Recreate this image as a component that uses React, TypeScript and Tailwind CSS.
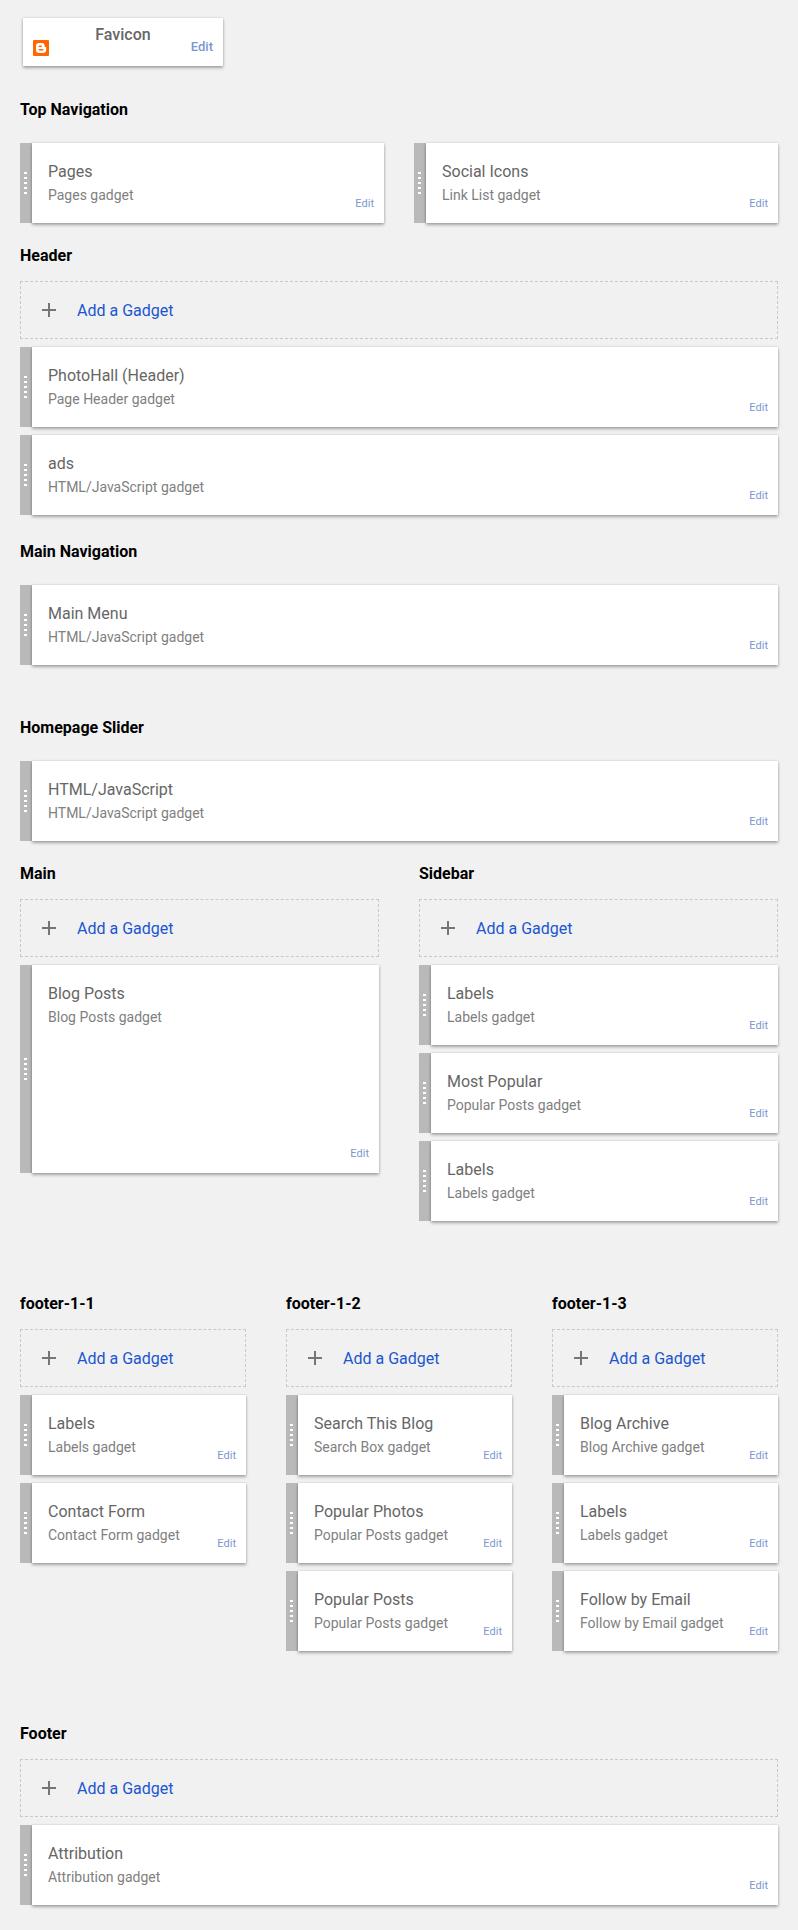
import type { ReactNode } from "react";

type GadgetProps = { title: string; kind: string; tall?: boolean };

function Gadget({ title, kind, tall = false }: GadgetProps) {
  return (
    <li className={`flex ${tall ? "h-52" : "h-20"}`}>
      <div className="flex w-3 shrink-0 flex-col justify-center gap-[3px] bg-[#b9b9b9] pl-1">
        {[0, 1, 2, 3, 4].map((dot) => (
          <span key={dot} className="h-[2px] w-[3px] bg-white" />
        ))}
      </div>
      <div className="relative min-w-0 flex-1 bg-white px-4 pt-[17px] shadow-[0_0_2px_rgba(0,0,0,0.16),0_2px_3px_rgba(0,0,0,0.3)]">
        <h3 className="truncate text-base leading-6 text-[#666]">{title}</h3>
        <p className="truncate text-sm leading-[22px] text-[#808080]">{kind}</p>
        <a href="#edit" aria-label={`Edit ${title}`} className="absolute right-[10px] bottom-[11px] text-[11px] leading-4 text-[#7b97d0]">
          Edit
        </a>
      </div>
    </li>
  );
}

function AddGadget() {
  return (
    <li className="flex">
      <button type="button" className="flex h-[58px] flex-1 cursor-pointer items-center border border-dashed border-[#c9c9c9] pl-[21px] text-base text-[#1a56d0]">
        <svg viewBox="0 0 14 14" className="size-[14px] fill-[#757575]" aria-hidden="true">
          <path d="M6 0h2v6h6v2H8v6H6V8H0V6h6z" />
        </svg>
        <span className="ml-[21px] pt-[2px]">Add a Gadget</span>
      </button>
    </li>
  );
}

type SectionProps = { name: string; addable?: boolean; children: ReactNode };

function Section({ name, addable = false, children }: SectionProps) {
  return (
    <section className="min-w-0">
      <h2 className="text-base leading-5 font-bold text-black">{name}</h2>
      <ul className={`flex flex-col gap-2 ${addable ? "mt-[15px]" : "mt-[23px]"}`}>
        {addable && <AddGadget />}
        {children}
      </ul>
    </section>
  );
}

function BloggerIcon() {
  return (
    <svg viewBox="0 0 16 16" className="size-4" aria-hidden="true">
      <rect width="16" height="16" rx="1" fill="#ff6600" />
      <path
        fill="#fff"
        fillRule="evenodd"
        d="M6.400 3h2.400A3 3 0 0 1 11.600 6c0 .6.2.9.7.9.6 0 .9.3.9.9v1.900A3.400 3.400 0 0 1 9.800 13H6.300A3.300 3.300 0 0 1 3 9.700V6.300A3.300 3.300 0 0 1 6.400 3zM6.300 5.500a.7.7 0 0 0 0 1.400h2a.7.7 0 0 0 0-1.400zM6.300 9a.75.75 0 0 0 0 1.500h3.500a.75.75 0 0 0 0-1.500z"
      />
    </svg>
  );
}

export default function App() {
  return (
    <main className="min-h-screen bg-[#f1f1f1] px-5 pt-[18px] pb-[25px] font-['Roboto',sans-serif]">
      <div className="relative ml-[3px] h-12 w-[200px] bg-white pt-[5px] shadow-[0_0_2px_rgba(0,0,0,0.16),0_2px_3px_rgba(0,0,0,0.3)]">
        <h2 className="text-center text-base leading-6 font-medium text-[#666]">Favicon</h2>
        <div className="absolute inset-x-[10px] bottom-[10px] flex items-end justify-between">
          <BloggerIcon />
          <a href="#favicon" aria-label="Edit Favicon" className="mb-px text-[13px] leading-4 font-medium text-[#7b97d0]">
            Edit
          </a>
        </div>
      </div>

      <div className="mt-[34px]">
        <Section name="Top Navigation">
          <li>
            <ul className="grid grid-cols-2 gap-[30px]">
              <Gadget title="Pages" kind="Pages gadget" />
              <Gadget title="Social Icons" kind="Link List gadget" />
            </ul>
          </li>
        </Section>
      </div>

      <div className="mt-[23px]">
        <Section name="Header" addable>
          <Gadget title="PhotoHall (Header)" kind="Page Header gadget" />
          <Gadget title="ads" kind="HTML/JavaScript gadget" />
        </Section>
      </div>

      <div className="mt-[27px]">
        <Section name="Main Navigation">
          <Gadget title="Main Menu" kind="HTML/JavaScript gadget" />
        </Section>
      </div>

      <div className="mt-[53px]">
        <Section name="Homepage Slider">
          <Gadget title="HTML/JavaScript" kind="HTML/JavaScript gadget" />
        </Section>
      </div>

      <div className="mt-[23px] grid grid-cols-2 gap-10">
        <Section name="Main" addable>
          <Gadget title="Blog Posts" kind="Blog Posts gadget" tall />
        </Section>
        <Section name="Sidebar" addable>
          <Gadget title="Labels" kind="Labels gadget" />
          <Gadget title="Most Popular" kind="Popular Posts gadget" />
          <Gadget title="Labels" kind="Labels gadget" />
        </Section>
      </div>

      <div className="mt-[73px] grid grid-cols-3 gap-10">
        <Section name="footer-1-1" addable>
          <Gadget title="Labels" kind="Labels gadget" />
          <Gadget title="Contact Form" kind="Contact Form gadget" />
        </Section>
        <Section name="footer-1-2" addable>
          <Gadget title="Search This Blog" kind="Search Box gadget" />
          <Gadget title="Popular Photos" kind="Popular Posts gadget" />
          <Gadget title="Popular Posts" kind="Popular Posts gadget" />
        </Section>
        <Section name="footer-1-3" addable>
          <Gadget title="Blog Archive" kind="Blog Archive gadget" />
          <Gadget title="Labels" kind="Labels gadget" />
          <Gadget title="Follow by Email" kind="Follow by Email gadget" />
        </Section>
      </div>

      <div className="mt-[73px]">
        <Section name="Footer" addable>
          <Gadget title="Attribution" kind="Attribution gadget" />
        </Section>
      </div>
    </main>
  );
}
